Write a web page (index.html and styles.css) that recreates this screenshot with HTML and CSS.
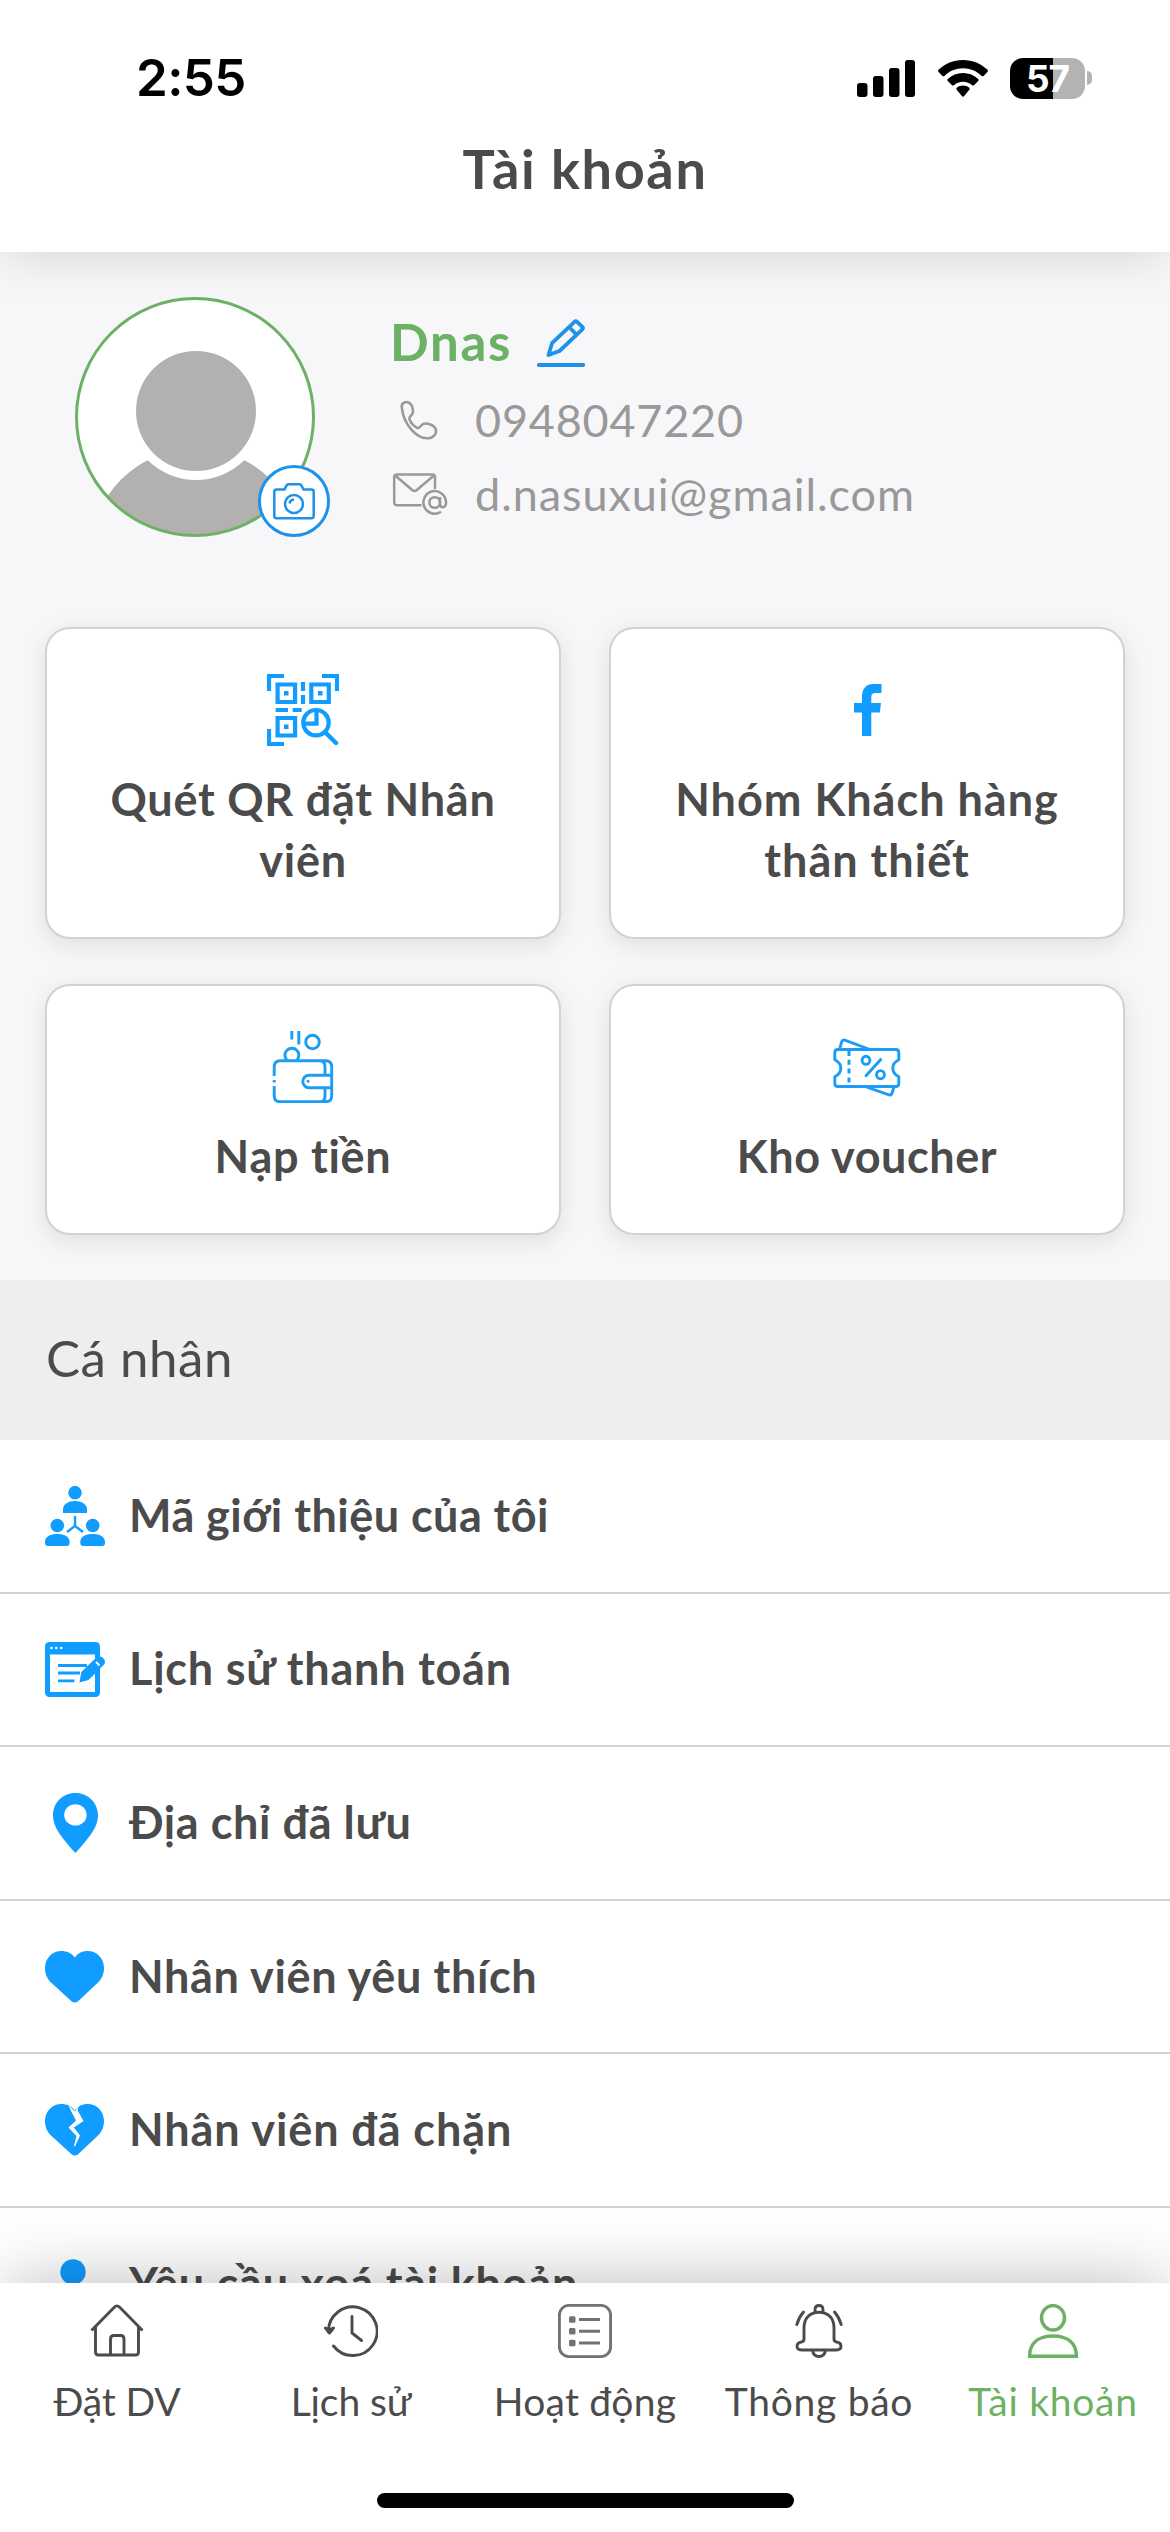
FILE: index.html
```
<!DOCTYPE html>
<html lang="vi">
<head>
<meta charset="utf-8">
<meta name="viewport" content="width=device-width">
<title>Tài khoản</title>
<link rel="stylesheet" href="styles.css">
</head>
<body>
<div class="app">
  <header class="header">
    <div class="status">
      <span class="status-time">2:55</span>
      <div class="status-icons">
        <svg width="58" height="37" viewBox="0 0 58 37"><rect y="23" width="10.5" height="14" rx="3"/><rect x="16" y="16" width="10.5" height="21" rx="3"/><rect x="32" y="8" width="10.5" height="29" rx="3"/><rect x="48" width="10" height="37" rx="3"/></svg>
        <svg class="wifi" width="50" height="37" viewBox="0 0 50 37"><path d="M25 0C15.500 0 6.700 3.700.5 9.800c-.6.6-.6 1.400-.1 2l4 4.100c.6.6 1.400.6 2 0C11.200 11 17.800 8.200 25 8.200S38.800 11 43.600 15.900c.6.6 1.400.6 2 0l4-4.100c.5-.6.5-1.400-.1-2C43.300 3.700 34.500 0 25 0z"/><path d="M25 13c-5.900 0-11.200 2.300-15.200 6-.6.6-.6 1.400 0 2l4.200 4.200c.5.5 1.300.5 1.900 0 2.400-2.200 5.600-3.500 9.100-3.500s6.700 1.300 9.100 3.500c.6.5 1.400.5 1.900 0l4.200-4.200c.6-.6.6-1.400 0-2-4-3.700-9.300-6-15.200-6z"/><path d="M25 25.500c-2.400 0-4.600.9-6.200 2.300-.6.5-.6 1.300-.1 1.900l5.300 6.600c.6.6 1.400.6 2 0l5.300-6.600c.5-.6.500-1.400-.1-1.900-1.600-1.400-3.800-2.300-6.200-2.300z"/></svg>
        <div class="battery"><span class="battery-body">57</span><i class="battery-cap"></i></div>
      </div>
    </div>
    <h1 class="title">Tài khoản</h1>
  </header>

  <main class="content">
    <section class="profile">
      <div class="avatar">
        <svg class="avatar-pic" viewBox="0 0 240 240"><defs><clipPath id="face"><circle cx="120" cy="120" r="119"/></clipPath></defs><circle cx="120" cy="120" r="118.500" fill="#fff"/><g clip-path="url(#face)"><circle cx="121" cy="257" r="105.600" fill="#b2b1af"/><circle cx="121" cy="114" r="69" fill="#fff"/><circle cx="121" cy="114" r="60" fill="#b2b1af"/></g><circle cx="120" cy="120" r="118.500" fill="none" stroke="#6cb164" stroke-width="3"/></svg>
        <span class="camera"><svg width="42" height="37" viewBox="0 0 42 37"><path d="M3.500 6.500h8l2.200-4.300q.5-.9 1.500-.9h11.600q1 0 1.500.9l2.200 4.300h8q2.200 0 2.200 2.200v24q0 2.500-2.200 2.500h-35q-2.200 0-2.200-2.500v-24q0-2.200 2.200-2.200z"/><circle cx="21" cy="21" r="9"/><path d="M16.500 20.500q.5-3.500 4.500-4"/></svg></span>
      </div>
      <div class="info">
        <div class="name-row"><span class="name">Dnas</span><svg class="pencil" width="48" height="48" viewBox="0 0 48 48"><path d="M1.800 46h44.400M11.500 36L15 24.200 37.500 2.800q1.300-1.200 2.600 0l5.200 5q1.300 1.300 0 2.600L22.500 32zM32.500 8.500l7.300 7.300"/></svg></div>
        <div class="contact">
          <svg width="54" height="42" viewBox="0 0 54 42"><path d="M9 9.500C7.500 5 11.500 2 15.500 3.500c4 1.600 5.500 8.500 3.800 11.500-1.500 2.500-4 3-2.600 6 1.600 3.500 4.300 6.200 7.300 7.800 2.500 1.400 3-1.800 5.300-3.300 3.500-2.300 10.500-.4 12.900 3.500 2.500 4.200-.7 9.500-6.200 10.200C23 40.800 10.500 24 9 9.500z"/></svg>
          <span class="phone">0948047220</span>
        </div>
        <div class="contact">
          <svg width="54" height="42" viewBox="0 0 54 42"><path d="M28.500 32.300H4Q1.200 32.300 1.200 29.500V4.300Q1.200 1.500 4 1.500h35.500Q42 1.500 42 4.300V16M2.200 2.500l17 14.500q2.300 1.800 4.600 0L41 2.500"/><path d="M48 38.800a11.300 11.300 0 1 1 5-9.300c0 6-6 6-6 1.500v-7"/><circle cx="41.700" cy="29.500" r="5.300"/></svg>
          <span class="email">d.nasuxui@gmail.com</span>
        </div>
      </div>
    </section>

    <section class="cards">
      <div class="card">
        <svg width="72" height="72" viewBox="0 0 72 72" fill="none" stroke="#119cff" stroke-width="4.200"><path d="M17 2H2v15M55 2h15v15M2 55v15h15M10.600 10.500h17.500v17.500H10.600zM44.300 10.500h17.500v17.500H44.300zM10.600 44h17.500v17.500H10.600zM36 8v9M36 21v9M8.600 36H21M25.700 36h9"/><path fill="#119cff" stroke="none" d="M17 17h4.500v4.500h-4.500zM51 17h4.500v4.500h-4.500zM17 50.500h4.500v4.500h-4.500z"/><circle cx="49" cy="48.700" r="12.700"/><path d="M49.500 36v13.700H36.500"/><path d="M58.500 58.500l10.500 10.500" stroke-width="4.500" stroke-linecap="round"/></svg>
        <p class="quet">Quét QR đặt Nhân viên</p>
      </div>
      <div class="card">
        <svg width="72" height="72" viewBox="0 0 72 72"><path fill="#119cff" d="M31 62V38.600h-8V29h8v-6.500C31 14.500 35.500 10 42.500 10h8v9h-6c-3 0-4.200 1.300-4.200 4.200V29H50l-1.200 9.600h-8.500V62z"/></svg>
        <p class="nhom">Nhóm Khách hàng thân thiết</p>
      </div>
      <div class="card">
        <svg width="72" height="72" viewBox="0 0 72 72" fill="none" stroke="#1b9cf5" stroke-width="2.900"><path d="M24.800 0v8.500M31.800 0v13.500"/><circle cx="45.500" cy="11" r="6.800"/><path d="M19.800 29a7 7 0 1 1 10.200 0"/><path d="M7.200 45V36q0-6.300 6-6.300h45.500q6 0 6 6.300v28.500q0 6.300-6 6.300H13.200q-6 0-6-6.300V55M7.200 49v2.400M53 29.700q5 0 5 6v8.500M58 57v8q0 5-4 5.800M64.700 44.300H42a6 6 0 0 0 0 12.400h22.700"/><circle cx="41" cy="50.300" r="1.500" fill="#1b9cf5" stroke="none"/></svg>
        <p class="nap">Nạp tiền</p>
      </div>
      <div class="card">
        <svg width="72" height="72" viewBox="0 0 72 72" fill="none" stroke="#1b9cf5" stroke-width="2.900" stroke-linejoin="round"><path d="M8.500 18.500l2.200-7.800q.8-2.300 3-1.600L39 18.500M34 55.500l24 8.300q2.300.7 3-1.500l2.100-6.800"/><path d="M6.800 18.500h58q3 0 3 3v7.300q-6 3-6 8.500t6 8.500v6.700q0 3-3 3h-58q-3 0-3-3v-6.700q6-3 6-8.500t-6-8.500v-7.300q0-3 3-3z"/><path d="M18 20v34" stroke-width="3" stroke-dasharray="5 3.800"/><ellipse cx="35" cy="29.300" rx="3.900" ry="4.100"/><ellipse cx="49.500" cy="43.700" rx="3.900" ry="4.100"/><path d="M49.700 28.500L35 44.700" stroke-linecap="round"/></svg>
        <p class="kho">Kho voucher</p>
      </div>
    </section>

    <h2 class="section">Cá nhân</h2>

    <ul class="menu">
      <li class="item">
        <svg class="item-icon" viewBox="0 0 60 60"><circle cx="30" cy="6.700" r="6.800"/><path d="M18 27v-3.500C18 18 23.500 15 30 15s12 3 12 8.500V27zM0 57v-1c0-5.500 5.500-8 12.300-8s12.300 2.500 12.300 8v1q0 3-3 3H3q-3 0-3-3zM35.300 57v-1c0-5.500 5.500-8 12.300-8S60 50.500 60 56v1q0 3-3 3H38.300q-3 0-3-3z"/><circle cx="12.300" cy="39.500" r="6.800"/><circle cx="47.700" cy="39.500" r="6.800"/><path d="M30 30v10l-8 6M30 40l8 6" fill="none" stroke="#119cff" stroke-width="2.400"/></svg>
        <span class="label ma">Mã giới thiệu của tôi</span>
      </li>
      <li class="item">
        <svg class="item-icon" viewBox="0 0 60 60"><rect y="3" width="55" height="55" rx="4.500"/><path fill="#fff" d="M5 15.500h45V53H5z"/><g fill="#fff"><circle cx="6.500" cy="9" r="1.300"/><circle cx="11.300" cy="9" r="1.300"/><circle cx="16.300" cy="9" r="1.300"/></g><path d="M13 26.500h29M13 34h22M13 41.800h16.500" fill="none" stroke="#119cff" stroke-width="2.800"/><path d="M34.500 43.500l1.800-10.500 15-14.500q4-2.500 7 .7t.6 6.500L43.500 41z"/><path d="M51 23l3.500 3.500" stroke="#fff" stroke-width="2"/></svg>
        <span class="label lich">Lịch sử thanh toán</span>
      </li>
      <li class="item">
        <svg class="item-icon" viewBox="0 0 60 60"><path fill-rule="evenodd" d="M30.400 0C17.800 0 8 9.800 8 22.400 8 35 18 46 30.400 60 42.800 46 53 35 53 22.400 53 9.800 43 0 30.400 0zm0 11.200a11.200 10.700 0 1 1 0 21.400 11.200 10.700 0 0 1 0-21.400z"/></svg>
        <span class="label dia">Địa chỉ đã lưu</span>
      </li>
      <li class="item">
        <svg class="item-icon" viewBox="0 0 60 60"><path d="M29.800 10.500C26.500 6 21.500 4 16.500 4 7 4 0 11.500 0 21c0 6.500 2.500 11 6 14.500l20.500 18.700q3.300 2.600 6.600 0L53 35.500C56.500 32 59 27.500 59 21 59 11.500 52 4 42.500 4c-5 0-9.500 2-12.700 6.500z"/></svg>
        <span class="label yeu">Nhân viên yêu thích</span>
      </li>
      <li class="item">
        <svg class="item-icon" viewBox="0 0 60 60"><path d="M29.800 10.500C26.500 6 21.500 4 16.500 4 7 4 0 11.500 0 21c0 6.500 2.500 11 6 14.500l20.500 18.700q3.300 2.600 6.600 0L53 35.500C56.500 32 59 27.500 59 21 59 11.500 52 4 42.500 4c-5 0-9.500 2-12.700 6.500z"/><path fill="#fff" d="M23.500 5l6.300 6.500L34 5.500l-1.500 4.700 6 10.800-9.700 6.500 6.200 8-5 11-1-.8 2.500-9.700-8-8.500 7.500-7-5-9.500z"/></svg>
        <span class="label chan">Nhân viên đã chặn</span>
      </li>
      <li class="item item-last">
        <svg class="item-icon" viewBox="0 0 60 60"><circle cx="28" cy="14" r="12.700"/><path d="M5 55c0-16 9-28 23-28s23 12 23 28z"/></svg>
        <span class="label xoa">Yêu cầu xoá tài khoản</span>
      </li>
    </ul>
  </main>

  <nav class="tabs">
    <div class="tab">
      <svg viewBox="0 0 54 54" stroke-width="2.900"><path d="M1.500 26.500L24.300 3.200q2.700-2.700 5.400 0l22.800 23.300M5.500 23v25q0 3 3 3h37q3 0 3-3V23M20.500 50.500V35q0-3.500 3.500-3.500h6.500q3.500 0 3.500 3.500v15.500"/></svg>
      <span class="dv">Đặt DV</span>
    </div>
    <div class="tab">
      <svg viewBox="0 0 54 54" stroke-width="2.900" stroke-linecap="round"><path d="M4.500 28A24.300 24.300 0 1 1 9.500 42M28 12.500V29l9.500 7.500"/><path d="M1.500 24l4 1.500 4-1.500-4 5z" fill="currentColor" stroke-linejoin="round"/></svg>
      <span class="ls">Lịch sử</span>
    </div>
    <div class="tab">
      <svg class="list-icon" viewBox="0 0 54 54" stroke-width="2.900"><rect x="1.400" y="1.400" width="51.200" height="51.200" rx="9.500"/><path d="M21 15.500h21M21 27.300h21M21 39h21"/><g fill="currentColor" stroke="none"><rect x="11" y="12.300" width="6.500" height="6.500" rx="1.500"/><rect x="11" y="24" width="6.500" height="6.500" rx="1.500"/><rect x="11" y="35.800" width="6.500" height="6.500" rx="1.500"/></g></svg>
      <span class="hd">Hoạt động</span>
    </div>
    <div class="tab">
      <svg viewBox="0 0 54 54" stroke-width="2.900" stroke-linejoin="round"><path d="M23 8V6q0-4.500 4-4.500T31 6v2M27 8.300C17.500 8.300 12 14.500 12 24v11q0 2.500-2.500 3-4.500.7-4.500 4.300t4.500 3.700h35q4.500 0 4.500-3.700T44.500 38q-2.500-.5-2.500-3V24C42 14.500 36.500 8.300 27 8.300zM20.500 46.500q1 6 6.500 6t6.500-6"/><path d="M11.500 8Q7 13 4.800 20.500M42.500 8Q47 13 49.200 20.500" stroke-linecap="round"/></svg>
      <span class="tb">Thông báo</span>
    </div>
    <div class="tab tab-active">
      <svg viewBox="0 0 54 54" stroke-width="3.500"><ellipse cx="27" cy="13.800" rx="11.500" ry="12.200"/><path d="M3.600 52.300C3.600 39 12.500 32 27 32s23.400 7 23.400 20.300z"/></svg>
      <span class="tk">Tài khoản</span>
    </div>
    <i class="home-bar"></i>
  </nav>
</div>
</body>
</html>
```
FILE: styles.css
```
* { box-sizing: border-box; }

body {
  margin: 0;
  background: #fff;
  color: #4b4b4b;
  font-family: Lato, "Open Sans", sans-serif;
}

h1, h2, p, ul { margin: 0; padding: 0; }
svg { display: block; flex: none; }

.app {
  display: flex;
  flex-direction: column;
  width: 1170px;
  height: 2532px;
  overflow: hidden;
}

/* Header */
.header {
  position: relative;
  z-index: 1;
  flex: none;
  height: 252px;
  background: #fff;
  box-shadow: 0 6px 48px -4px rgba(0, 0, 0, .15);
}

.status {
  display: flex;
  align-items: center;
  justify-content: space-between;
  height: 136px;
  padding: 20px 78px 0 136px;
  color: #000;
}

.status-time {
  font: 600 51px/60px Inter, sans-serif;
  letter-spacing: -.6px;
}

.status-icons { display: flex; align-items: center; }
.wifi { margin: 0 22px 0 23px; }
.battery { display: flex; align-items: center; gap: 2px; }

.battery-body {
  width: 75px;
  height: 41px;
  border-radius: 13px;
  background: linear-gradient(90deg, #000 43px, #b3b3b3 43px);
  color: #fff;
  font: 700 37px/41px Inter, sans-serif;
  letter-spacing: -1px;
  text-align: center;
}

.battery-cap {
  width: 5px;
  height: 14px;
  border-radius: 0 5px 5px 0;
  background: #b3b3b3;
}

.title {
  font-size: 54px;
  font-weight: 700;
  line-height: 66px;
  letter-spacing: 1.65px;
  text-align: center;
}

/* Scrolled content */
.content {
  flex: 1;
  min-height: 0;
  overflow: hidden;
  background: #f7f7fa;
}

.profile {
  display: flex;
  gap: 78px;
  height: 375px;
  padding: 45px 75px 0;
}

.avatar { position: relative; width: 240px; height: 240px; }
.avatar-pic { width: 240px; height: 240px; }

.camera {
  position: absolute;
  right: -15px;
  bottom: 0;
  display: grid;
  place-items: center;
  width: 72px;
  height: 72px;
  border: 3px solid #1c92ea;
  border-radius: 50%;
  background: #fff;
}

.camera svg { fill: none; stroke: #1c92ea; stroke-width: 2.5; }

.info { padding-top: 2px; }

.name-row {
  display: flex;
  align-items: center;
  gap: 25px;
  height: 84px;
}

.name {
  margin-left: -3px;
  color: #6cb164;
  font-size: 51px;
  font-weight: 700;
  letter-spacing: 1.68px;
}

.pencil { margin-top: 3px; fill: none; stroke: #1c92ea; stroke-width: 3.8; stroke-linecap: round; stroke-linejoin: round; }

.contact {
  display: flex;
  align-items: center;
  gap: 28px;
  height: 74px;
  color: #999;
  font-size: 45px;
}

.contact svg { fill: none; stroke: #999; stroke-width: 2.5; overflow: visible; }
.phone { letter-spacing: .79px; }
.email { letter-spacing: .93px; }

/* Shortcut cards */
.cards {
  display: grid;
  grid-template-columns: 1fr 1fr;
  gap: 45px 48px;
  padding: 0 45px 45px;
}

.card {
  display: flex;
  flex-direction: column;
  align-items: center;
  gap: 23px;
  padding: 45px 48px 46px;
  border: 2px solid #d2d2d2;
  border-radius: 25px;
  background: #fff;
  box-shadow: 0 6px 24px rgba(0, 0, 0, .1);
  font-size: 45px;
  font-weight: 700;
  line-height: 61px;
  text-align: center;
}

.quet { letter-spacing: .77px; }
.nhom { letter-spacing: 1px; }
.nap { letter-spacing: .73px; }
.kho { letter-spacing: .56px; }

/* Personal menu */
.section {
  height: 160px;
  padding-left: 46px;
  background: #eee;
  font-size: 51px;
  font-weight: 400;
  line-height: 156px;
  letter-spacing: .54px;
}

.menu { list-style: none; background: #fff; }

.item {
  display: flex;
  align-items: center;
  gap: 24px;
  height: 153.6px;
  padding: 0 45px;
  border-bottom: 2px solid #d2d2d2;
}

.item-icon { width: 60px; height: 60px; fill: #119cff; }
.item-last .item-icon { margin-top: 8px; }

.label {
  padding-bottom: 2px;
  font-size: 45px;
  font-weight: 700;
}

.ma { letter-spacing: .47px; }
.lich { letter-spacing: .77px; }
.dia { letter-spacing: .58px; }
.yeu { letter-spacing: .64px; }
.chan { letter-spacing: .9px; }
.xoa { letter-spacing: .78px; }

/* Bottom tabs */
.tabs {
  position: relative;
  z-index: 1;
  display: grid;
  grid-template-columns: repeat(5, 234px);
  flex: none;
  height: 249px;
  padding-top: 21px;
  background: #fff;
  box-shadow: 0 -8px 64px -6px rgba(0, 0, 0, .25);
}

.tab {
  display: flex;
  flex-direction: column;
  align-items: center;
  gap: 19px;
  font-size: 39px;
  line-height: 48px;
  white-space: nowrap;
}

.tab svg { width: 54px; height: 54px; fill: none; stroke: currentColor; }
.tab .list-icon { color: #727272; }
.tab-active { color: #6cb164; }

.dv { letter-spacing: -.1px; }
.ls { letter-spacing: -.11px; }
.hd { letter-spacing: .22px; }
.tb { letter-spacing: .72px; }
.tk { letter-spacing: .74px; }

.home-bar {
  position: absolute;
  left: 377px;
  bottom: 24px;
  width: 417px;
  height: 15px;
  border-radius: 8px;
  background: #000;
}
```
